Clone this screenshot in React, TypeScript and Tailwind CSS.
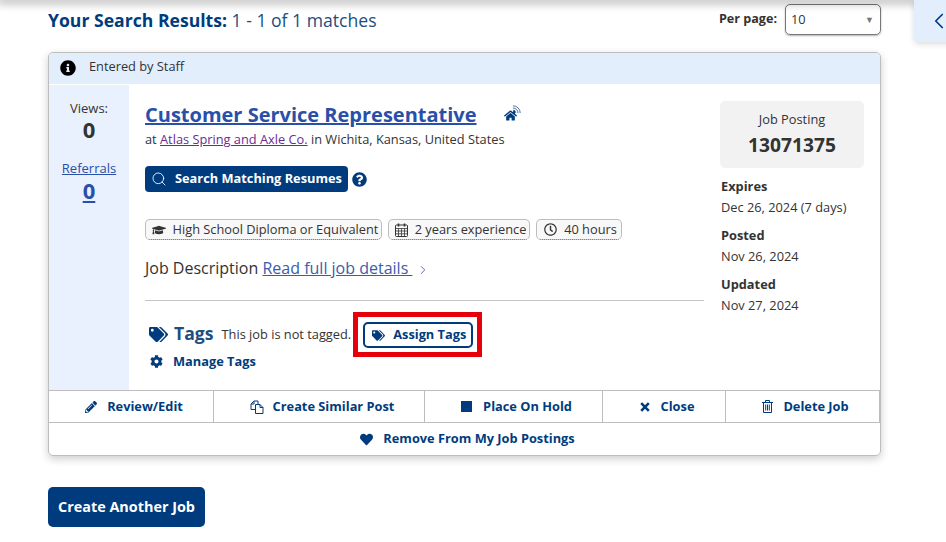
import { ChevronLeft, ChevronRight, Search } from 'lucide-react'
import {
  FaCog,
  FaGraduationCap,
  FaHeart,
  FaHome,
  FaInfoCircle,
  FaPencilAlt,
  FaQuestionCircle,
  FaRegClock,
  FaSquareFull,
  FaTags,
} from 'react-icons/fa'

const CopyIcon = () => (
  <svg viewBox="0 0 14 14" className="h-[14px] w-[14px]" fill="none" stroke="currentColor" strokeWidth="1">
    <path d="M5 9.5H1V4l3-3h4v3" />
    <path d="M4 1v3H1" />
    <path d="M5.5 4.5H10l3 3v6H5.5z" fill="white" />
    <path d="M10 4.5v3h3" />
  </svg>
)

const CloseIcon = () => (
  <svg viewBox="0 0 10 10" className="h-[10px] w-[10px]" fill="none" stroke="currentColor" strokeWidth="2.6">
    <path d="M1.2 1.2l7.6 7.6M8.8 1.2L1.2 8.8" />
  </svg>
)

const TrashIcon = () => (
  <svg viewBox="0 0 11 13" className="h-[13px] w-[11px]" fill="none" stroke="currentColor" strokeWidth="1">
    <path d="M0 2.5h11M3.5 2.5V.5h4v2" />
    <path d="M1.5 2.5v10h8v-10" />
    <path d="M3.7 4.5v6M5.5 4.5v6M7.3 4.5v6" />
  </svg>
)

const CalendarIcon = () => (
  <svg viewBox="0 0 13 14" className="h-[14px] w-[13px]" fill="none" stroke="currentColor" strokeWidth="1">
    <rect x="0.5" y="2" width="12" height="11.5" rx="1" />
    <path d="M0.5 5.5h12M0.5 8h12M0.5 10.8h12M3.5 5.5v8M6.5 5.5v8M9.5 5.5v8" strokeWidth="0.8" />
    <path d="M3.5 0.5v3M9.5 0.5v3" strokeWidth="1.6" />
  </svg>
)

const actions = [
  { label: 'Review/Edit', icon: <FaPencilAlt className="text-[12px]" />, width: 'w-[165px]', gap: 'gap-[10px]' },
  { label: 'Create Similar Post', icon: <CopyIcon />, width: 'w-[211px]', gap: 'gap-[9px]' },
  { label: 'Place On Hold', icon: <FaSquareFull className="text-[11px]" />, width: 'w-[178px]', gap: 'gap-[11px]' },
  { label: 'Close', icon: <CloseIcon />, width: 'w-[123px]', gap: 'gap-[11px]' },
  { label: 'Delete Job', icon: <TrashIcon />, width: 'flex-1', gap: 'gap-[10px]' },
]

const pills = [
  { label: 'High School Diploma or Equivalent', icon: <FaGraduationCap className="text-[14px]" />, width: 'w-[237px]' },
  { label: '2 years experience', icon: <CalendarIcon />, width: 'w-[142px]' },
  { label: '40 hours', icon: <FaRegClock className="text-[13px]" />, width: 'w-[86px]' },
]

const dates = [
  { title: 'Expires', value: 'Dec 26, 2024 (7 days)' },
  { title: 'Posted', value: 'Nov 26, 2024' },
  { title: 'Updated', value: 'Nov 27, 2024' },
]

export default function App() {
  return (
    <div className="relative h-[542px] w-[946px] overflow-hidden bg-white font-['Open_Sans',sans-serif] text-[#333333]">
      {/* Shadow from the page header above */}
      <div className="absolute top-0 left-0 h-0 w-full shadow-[0_0_10px_3px_rgba(0,0,0,0.35)]" />

      {/* Side tab */}
      <div className="absolute top-0 left-[914px] flex h-[42px] w-[40px] items-center rounded-bl-[5px] bg-[#e2eefc] pl-[12px] shadow-[0_2px_6px_rgba(0,0,0,0.15)]">
        <ChevronLeft className="h-[26px] w-[26px] shrink-0 text-[#003c7d]" strokeWidth={1.6} />
      </div>

      <main className="w-[881px] pt-[4px] pl-[48px]">
        {/* Results header */}
        <div className="flex h-[31px] items-center justify-between">
          <h1 className="text-[17.6px] leading-[32px] text-[#1d4e7e]">
            <span className="font-bold text-[#003c7d]">Your Search Results:</span> 1 - 1 of 1 matches
          </h1>
          <div className="flex items-center gap-[8px]">
            <span className="text-[12.6px] font-bold">Per page:</span>
            <div className="flex h-[31px] w-[96px] items-center justify-between rounded-[5px] border border-[#777777] pr-[6px] pl-[5px] text-[12.8px] shadow-[0_1px_2px_rgba(0,0,0,0.3)]">
              <span>10</span>
              <span className="text-[9px] text-[#777777]">▼</span>
            </div>
          </div>
        </div>

        {/* Job card */}
        <section className="mt-[17px] rounded-[5px] border border-[#bdbdbd] shadow-[0_3px_8px_rgba(0,0,0,0.2)]">
          <div className="flex h-[31px] rounded-t-[5px] bg-[#e2eefc] pl-[11px] text-[12.8px]">
            <FaInfoCircle className="mt-[7px] text-[16px] text-black" />
            <span className="mt-[4px] ml-[13px]">Entered by Staff</span>
          </div>

          <div className="flex h-[306px]">
            {/* Stats */}
            <div className="mt-px flex w-[80px] flex-col items-center bg-[#e8f1fd] pt-[14px]">
              <span className="text-[13px] leading-[18px]">Views:</span>
              <span className="text-[22px] leading-[24px] font-bold">0</span>
              <a className="mt-[18px] text-[13px] leading-[18px] text-[#2a4fa8] underline">Referrals</a>
              <a className="text-[22px] leading-[26px] font-bold text-[#2a4fa8] underline">0</a>
            </div>

            {/* Details */}
            <div className="w-[575px] pt-[17px] pl-[16px]">
              <div className="flex items-start">
                <a className="text-[20px] leading-[28px] font-bold text-[#2a4fa8] underline">
                  Customer Service Representative
                </a>
                <div className="relative mt-[5px] ml-[27px] h-[16px] w-[16px] text-[#003c7d]">
                  <FaHome className="absolute bottom-0 left-0 text-[13px]" />
                  <svg viewBox="0 0 9 9" className="absolute -top-[1px] -right-[1px] h-[9px] w-[9px]" fill="none" stroke="currentColor" strokeWidth="0.7">
                    <path d="M1 5.2a2.8 2.8 0 0 1 2.8 2.8" />
                    <path d="M1 3a5 5 0 0 1 5 5" />
                    <path d="M1 .8a7.2 7.2 0 0 1 7.2 7.2" />
                  </svg>
                </div>
              </div>
              <p className="text-[12.8px] leading-[20px]">
                at <a className="text-[#6b2c91] underline">Atlas Spring and Axle Co.</a> in Wichita, Kansas, United States
              </p>

              <div className="mt-[17px] flex items-center gap-[4px]">
                <button className="flex h-[26px] w-[203px] items-center rounded-[4px] bg-[#003c7d] pl-[6px] text-[12.8px] font-bold text-white">
                  <Search className="h-[16px] w-[16px]" strokeWidth={1.3} />
                  <span className="ml-[8px]">Search Matching Resumes</span>
                </button>
                <FaQuestionCircle className="text-[15px] text-[#003c7d]" />
              </div>

              <div className="mt-[27px] flex gap-[6px]">
                {pills.map((pill) => (
                  <span
                    key={pill.label}
                    className={`flex h-[21px] items-center justify-center gap-[7px] rounded-[5px] border border-[#bdbdbd] border-b-[#555555] bg-[#f8f8f8] pl-[3px] text-[12.8px] whitespace-nowrap [border-bottom-style:dotted] ${pill.width}`}
                  >
                    {pill.icon}
                    {pill.label}
                  </span>
                ))}
              </div>

              <p className="mt-[16px] text-[16px] leading-[24px]">
                Job Description <a className="text-[#3b5cab] underline">Read full job details </a>
                <ChevronRight className="ml-[4px] inline h-[14px] w-[14px] text-[#3b5cab]" strokeWidth={1.5} />
              </p>

              <hr className="mt-[20px] border-[#c4c4c4]" />

              <div className="mt-[11px] flex items-center">
                <FaTags className="ml-[4px] text-[19px] text-[#003c7d]" />
                <span className="ml-[6px] pb-[3px] text-[17.6px] leading-[24px] font-bold text-[#1d4e7e]">Tags</span>
                <span className="ml-[8px] text-[12.8px]">This job is not tagged.</span>
                <span className="ml-[2px] border-[5px] border-[#e5000b] pt-[5px] pr-[4px] pb-[4px] pl-[5px]">
                  <span className="flex h-[26px] w-[110px] items-center rounded-[5px] border-2 border-[#003c7d] pl-[7px] text-[12.8px] font-bold text-[#003c7d]">
                    <FaTags className="text-[13px]" />
                    <span className="ml-[8px]">Assign Tags</span>
                  </span>
                </span>
              </div>

              <div className="-mt-[5px] flex items-center text-[12.8px] font-bold text-[#003c7d]">
                <FaCog className="ml-[5px] text-[13px]" />
                <span className="ml-[10px]">Manage Tags</span>
              </div>
            </div>

            {/* Posting summary */}
            <aside className="ml-[16px] w-[144px] pt-[17px]">
              <div className="flex h-[67px] flex-col items-center justify-center rounded-[5px] bg-[#f2f2f2]">
                <span className="mb-px text-[12.8px] leading-[20px]">Job Posting</span>
                <span className="text-[19.2px] leading-[30px] font-bold">13071375</span>
              </div>
              <dl className="mt-[8px] flex flex-col gap-[7px] pl-px text-[12.8px] leading-[21px]">
                {dates.map((date) => (
                  <div key={date.title}>
                    <dt className="font-bold">{date.title}</dt>
                    <dd>{date.value}</dd>
                  </div>
                ))}
              </dl>
            </aside>
          </div>

          {/* Actions */}
          <div className="flex h-[33px] border-y border-[#bdbdbd]">
            {actions.map((action) => (
              <button
                key={action.label}
                className={`flex items-center justify-center border-r border-[#bdbdbd] pl-[6px] text-[12.8px] font-bold text-[#003c7d] ${action.width} ${action.gap}`}
              >
                {action.icon}
                {action.label}
              </button>
            ))}
          </div>
          <button className="flex h-[32px] w-full items-center justify-center gap-[10px] pl-[6px] text-[12.8px] font-bold text-[#003c7d]">
            <FaHeart className="text-[13px]" />
            Remove From My Job Postings
          </button>
        </section>

        <button className="mt-[31px] h-[40px] w-[157px] rounded-[5px] bg-[#003c7d] text-[14.4px] font-bold text-white">
          Create Another Job
        </button>
      </main>
    </div>
  )
}
